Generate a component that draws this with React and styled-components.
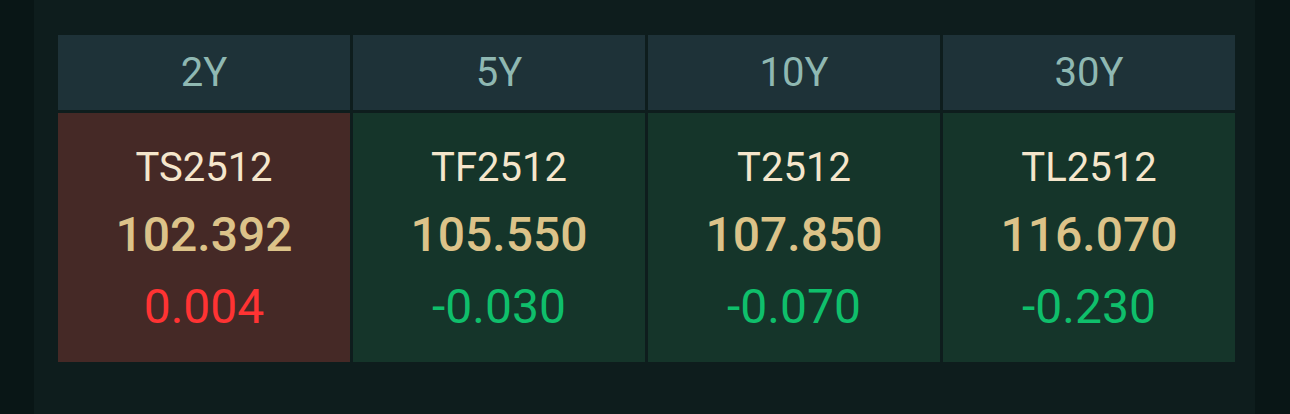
import styled, { createGlobalStyle } from "styled-components";

const GlobalStyle = createGlobalStyle`
  html, body {
    margin: 0;
    padding: 0;
    background: #091616;
  }
  body {
    font-family: Roboto, "Liberation Sans", sans-serif;
  }
`

const Page = styled.div`
  display: flex;
  min-height: 100vh;
  background: #091616;
`

const Panel = styled.section`
  width: 1221px;
  margin-left: 34px;
  padding: 35px 20px 0 24px;
  box-sizing: border-box;
  background: #0e1d1d;
`

const Board = styled.div`
  display: grid;
  grid-template-columns: repeat(4, 292px);
  grid-template-rows: 75px 249px;
  gap: 3px;
`

const Tenor = styled.div`
  display: flex;
  align-items: center;
  justify-content: center;
  background: #1e3238;
  color: #8fb8b2;
  font-size: 40px;
  line-height: 75px;
`

const Quote = styled.div`
  display: flex;
  flex-direction: column;
  align-items: center;
  padding-top: 24px;
  box-sizing: border-box;
  background: ${p => (p.$up ? "#452926" : "#15352a")};
`

const Code = styled.div`
  color: #f5e6cc;
  font-size: 40px;
  line-height: 62px;
`

const Price = styled.div`
  color: #dcc389;
  font-size: 48px;
  font-weight: 500;
  line-height: 72px;
`

const Change = styled.div`
  color: ${p => (p.$up ? "#ff3333" : "#0fbf6b")};
  font-size: 48px;
  line-height: 72px;
`

const contracts = [
    { tenor: "2Y", code: "TS2512", price: "102.392", change: "0.004" },
    { tenor: "5Y", code: "TF2512", price: "105.550", change: "-0.030" },
    { tenor: "10Y", code: "T2512", price: "107.850", change: "-0.070" },
    { tenor: "30Y", code: "TL2512", price: "116.070", change: "-0.230" },
]

function App() {
    return (
        <Page>
            <GlobalStyle />
            <Panel>
                <Board>
                    {contracts.map(c => (
                        <Tenor key={c.tenor}>{c.tenor}</Tenor>
                    ))}
                    {contracts.map(c => {
                        const up = !c.change.startsWith("-")
                        return (
                            <Quote key={c.code} $up={up}>
                                <Code>{c.code}</Code>
                                <Price>{c.price}</Price>
                                <Change $up={up}>{c.change}</Change>
                            </Quote>
                        )
                    })}
                </Board>
            </Panel>
        </Page>
    );
}

export default App;
